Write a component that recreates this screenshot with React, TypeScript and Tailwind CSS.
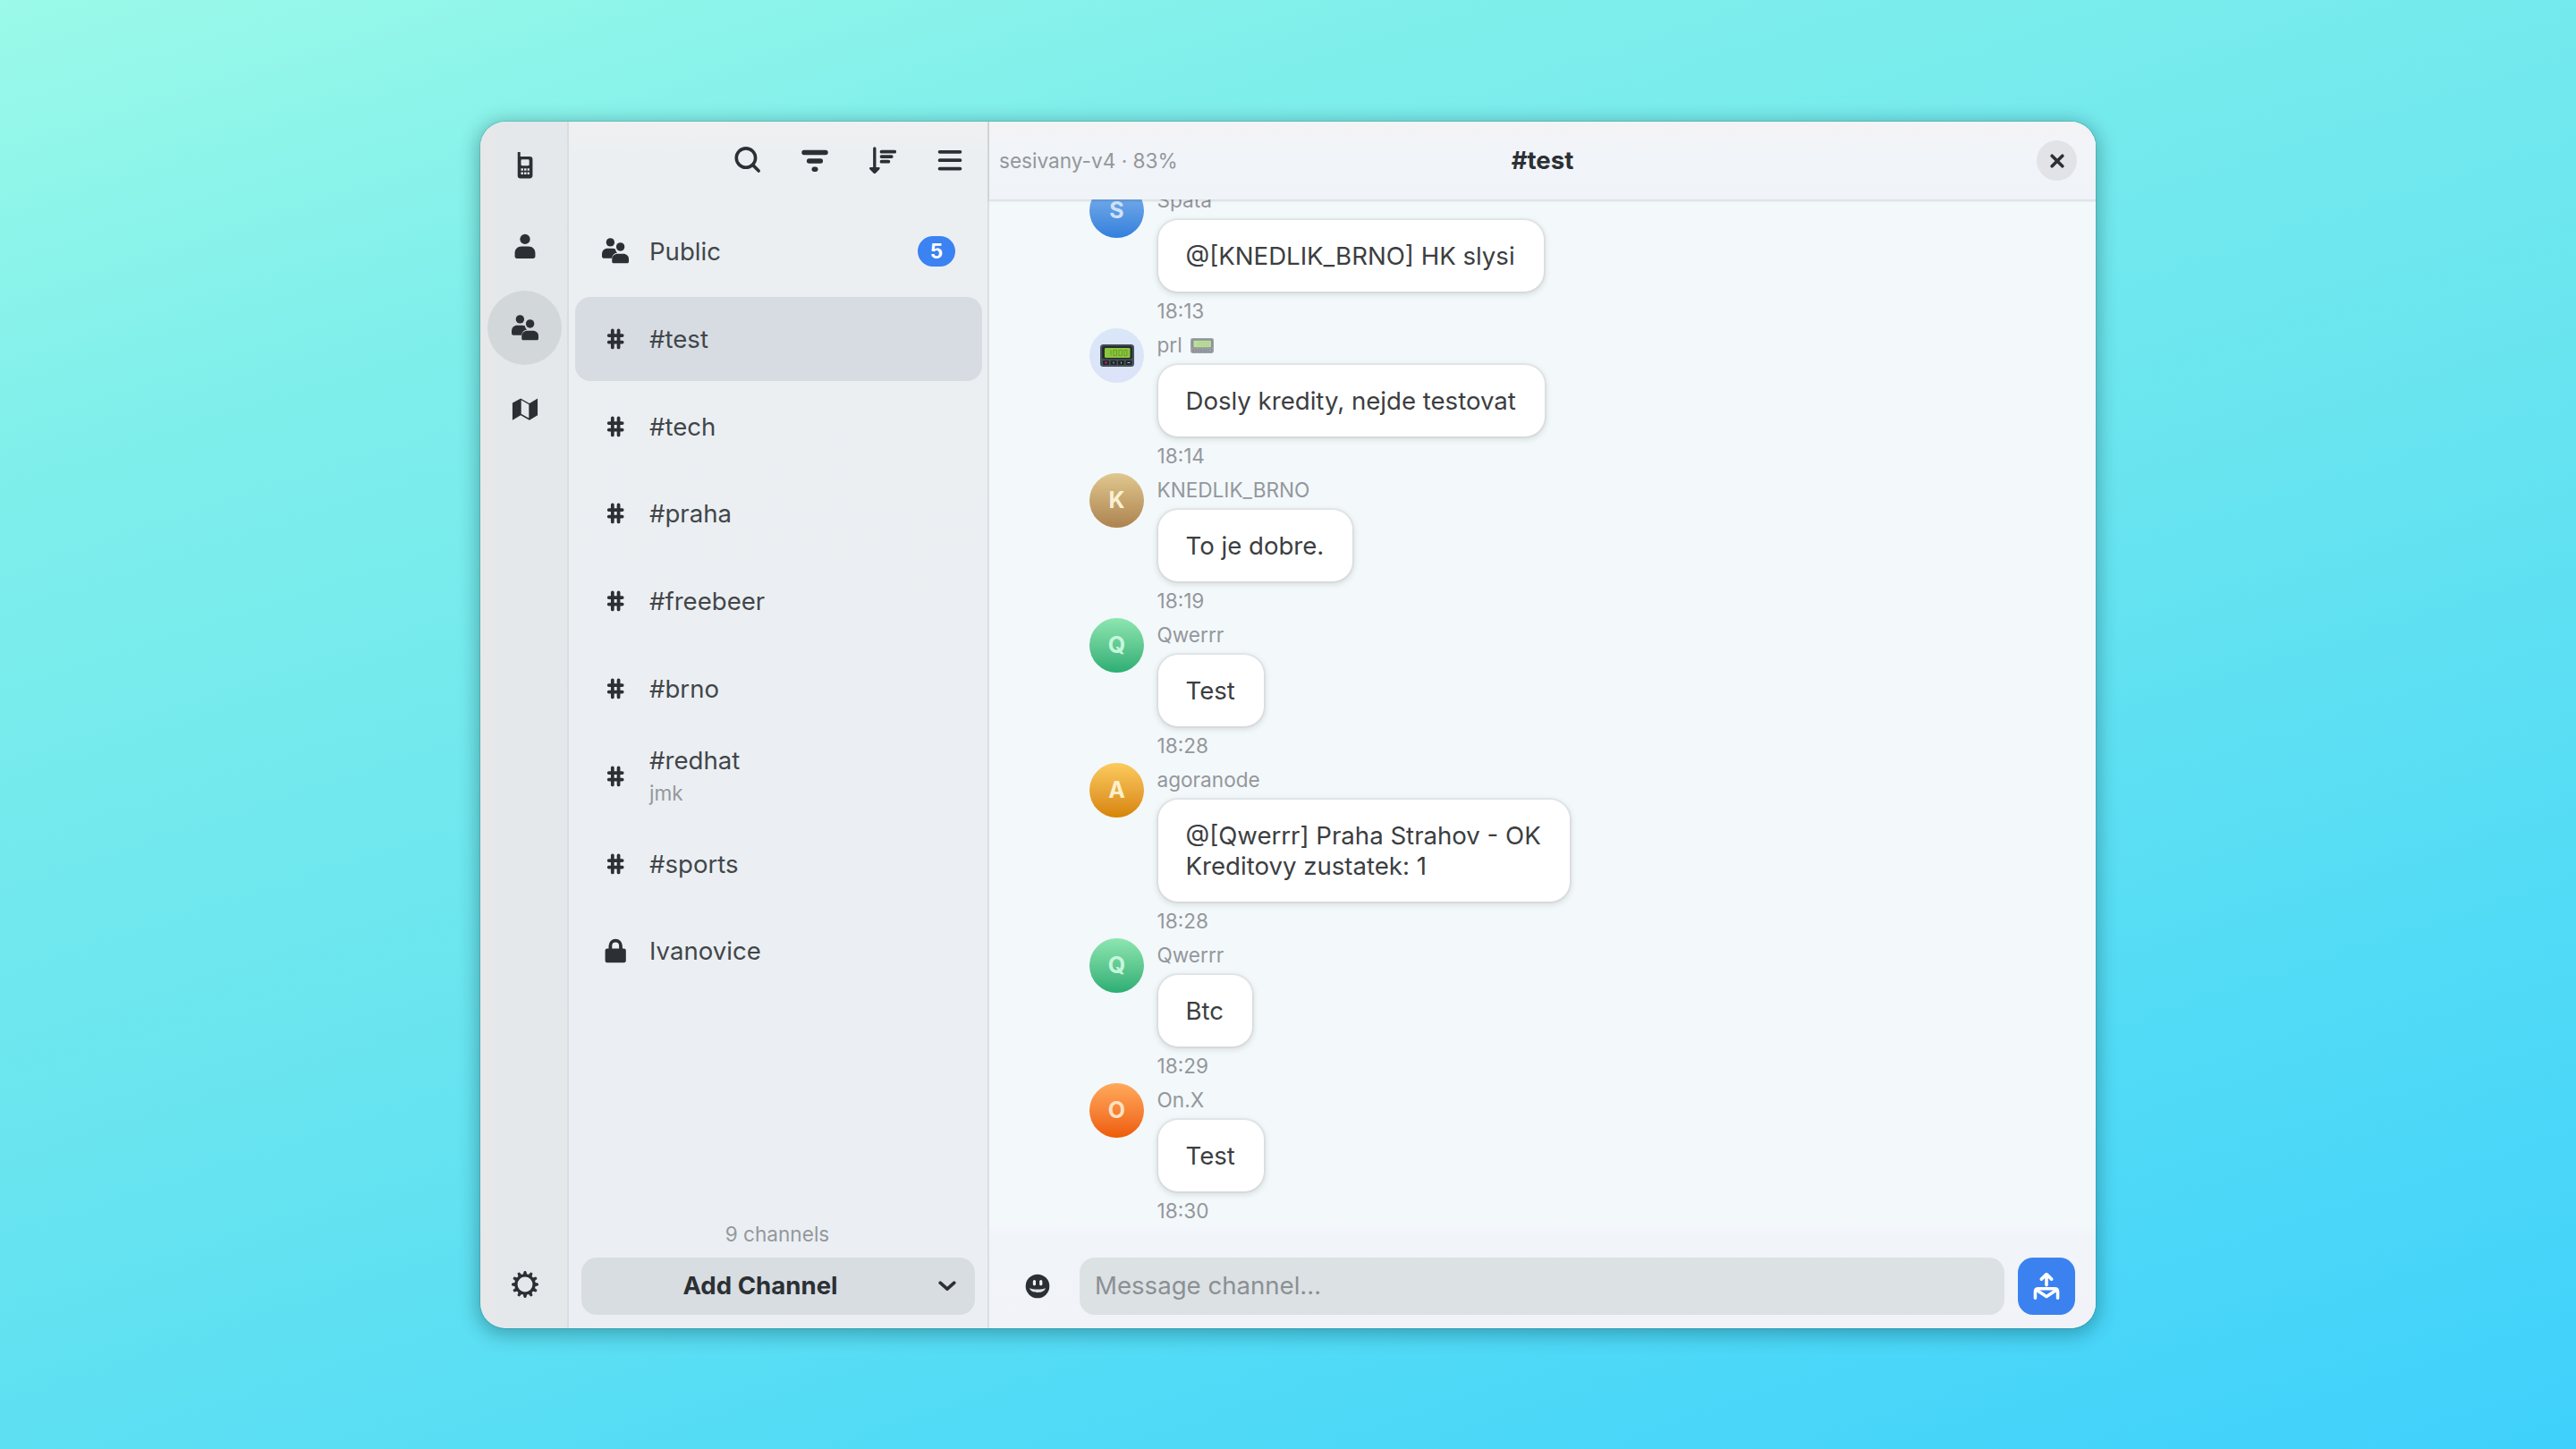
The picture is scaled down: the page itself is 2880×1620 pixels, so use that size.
import type { ReactNode } from "react";
import clsx from "clsx";

type IconProps = { className?: string };

// All icons share the 16x16 symbolic grid.
function Icon({ className, children }: IconProps & { children: ReactNode }) {
  return (
    <svg viewBox="0 0 16 16" fill="currentColor" className={clsx("block h-[30px] w-[30px] shrink-0", className)}>
      {children}
    </svg>
  );
}

function PhoneIcon() {
  return (
    <Icon>
      <path
        fillRule="evenodd"
        d="M3.600 .4a.8.8 0 0 1 1.600 0V2.600H10.800a1.700 1.700 0 0 1 1.700 1.700v9.600A1.800 1.800 0 0 1 10.700 15.700H5.300A1.700 1.700 0 0 1 3.600 14zM5.600 5v2.500a.6.600 0 0 0 .6.600h3.700a.6.600 0 0 0 .6-.6V5a.6.600 0 0 0-.6-.6H6.200a.6.600 0 0 0-.6.600zM5.600 9.700v1.300h1.300V9.700zm1.900 0v1.300h1.300V9.700zm1.900 0v1.300h1.200V9.700zM5.600 12v1.300h1.300V12zm1.900 0v1.300h1.300V12zm1.900 0v1.300h1.200V12z"
      />
    </Icon>
  );
}

function PersonIcon() {
  return (
    <Icon>
      <circle cx="8" cy="3.400" r="3" />
      <path d="M6 7.700h4c2.600 0 4.100 1.700 4.100 4.100v1.800c0 .8-.5 1.300-1.300 1.300H3.200c-.8 0-1.300-.5-1.300-1.300v-1.800c0-2.400 1.500-4.100 4.100-4.100z" />
    </Icon>
  );
}

function PeopleIcon() {
  return (
    <Icon>
      <circle cx="5" cy="2.600" r="2.500" />
      <circle cx="11" cy="5.300" r="2.500" />
      <path d="M3.500 6.200h2.700c.7 0 1.300.1 1.800.4.100.9.500 1.600 1.100 2.200-1.800.3-3 1.500-3.200 3.300H1C.4 12.100 0 11.700 0 11.100V9.700c0-2.100 1.300-3.500 3.500-3.500z" />
      <path d="M9.500 9.500h3c2.200 0 3.500 1.300 3.500 3.200v1.400c0 .6-.4 1-1 1H7c-.6 0-1-.4-1-1v-1.400c0-1.900 1.300-3.200 3.500-3.200z" />
    </Icon>
  );
}

function MapIcon() {
  return (
    <Icon>
      <path
        fillRule="evenodd"
        d="M.5 4 5.400 1.300l5.200 2.900 4.900-2.900v10L10.600 14.200l-5.200-2.900L.5 14.200zM5.700 2.300v8.200l4.600 2.600V4.900z"
      />
    </Icon>
  );
}

function GearIcon() {
  const teeth = Array.from({ length: 12 }, (_, i) => i * 30);
  return (
    <Icon>
      <circle cx="8" cy="8" r="5.400" fill="none" stroke="currentColor" strokeWidth="1.800" />
      {teeth.map((deg) => (
        <path key={deg} d="M7 2.800 7.500.3h1l.5 2.500z" transform={`rotate(${deg} 8 8)`} stroke="currentColor" strokeWidth=".5" strokeLinejoin="round" />
      ))}
    </Icon>
  );
}

function SearchIcon() {
  return (
    <Icon>
      <g fill="none" stroke="currentColor" strokeWidth="1.900" strokeLinecap="round">
        <circle cx="6.900" cy="6.700" r="5.700" />
        <path d="m11.100 11 3.400 3.400" />
      </g>
    </Icon>
  );
}

function FilterIcon() {
  return (
    <Icon>
      <g stroke="currentColor" strokeWidth="2.900" strokeLinecap="round">
        <path d="M1.600 3.500h12.800M4.600 8.500h6.800" />
        <path d="M7.600 13.500h.8" />
      </g>
    </Icon>
  );
}

function SortIcon() {
  return (
    <Icon>
      <path d="M2.200 1a.9.900 0 0 1 1.800 0v11.200h1.500c.7 0 1 .7.500 1.200l-2.200 2.300c-.4.400-1 .4-1.400 0L.200 13.400c-.5-.5-.2-1.200.5-1.200h1.500z" />
      <path d="M7.200 3h7.900M7.200 5.900h6M7.200 8.900h4.200" stroke="currentColor" strokeWidth="2" strokeLinecap="round" />
    </Icon>
  );
}

function MenuIcon() {
  return (
    <Icon>
      <path d="M1.900 3.100h12.200M1.900 8.100h12.200M1.900 13.100h12.200" stroke="currentColor" strokeWidth="2" strokeLinecap="round" />
    </Icon>
  );
}

function HashIcon() {
  return (
    <Icon>
      <path
        d="M6.300 2.800v10.200M9.900 2.800v10.200M4.100 5.900h8M4.100 9.900h8"
        stroke="currentColor"
        strokeWidth="2"
        strokeLinecap="round"
      />
    </Icon>
  );
}

function LockIcon() {
  return (
    <Icon>
      <path d="M5 8V5a3.100 3.100 0 0 1 6.200 0V8" fill="none" stroke="currentColor" strokeWidth="2" />
      <rect x="1.900" y="6.600" width="12.400" height="8.400" rx="1.200" />
    </Icon>
  );
}

function SmileIcon() {
  return (
    <Icon>
      <circle cx="8" cy="8" r="7.100" />
      <path d="M6.100 5.100v1.700M10 5.100v1.700" stroke="#f1f4f8" strokeWidth="1.700" strokeLinecap="round" />
      <path d="M3.200 9.200c1.200.5 2.800.7 4.800.7s3.600-.2 4.800-.7c-.5 1.600-2.200 2.500-4.800 2.500s-4.300-.9-4.800-2.500z" fill="#dfe3e7" />
    </Icon>
  );
}

function SendIcon() {
  return (
    <Icon>
      <g fill="none" stroke="currentColor" strokeWidth="1.900" strokeLinecap="round" strokeLinejoin="round">
        <path d="M8 7.300V1.200M5 3.800l3-3 3 3" />
        <path d="M1.300 15v-3.700c0-1.200.6-1.800 1.800-1.800h9.800c1.200 0 1.800.6 1.800 1.800V15" />
        <path d="m2.500 10.500 5.500 3.700 5.500-3.700" />
      </g>
    </Icon>
  );
}

function Pager({ className }: IconProps) {
  return (
    <svg viewBox="0 0 38 25" preserveAspectRatio="none" className={clsx("block shrink-0", className)}>
      <rect width="38" height="25" rx="3.500" fill="#46525a" />
      <rect x="2" y="1.800" width="34" height="14.700" rx="2.500" fill="#252c30" />
      <rect x="5" y="4" width="28.500" height="11" rx="1.200" fill="#8dc63a" />
      <path d="M12 6.500v6M15 6.500h3.500v6H15zM21 6.500h3.500v6H21zM27 6.500h3v6h-3z" fill="none" stroke="#6aa033" strokeWidth="1.100" />
      <g fill="#20272b">
        <rect x="3" y="18" width="7" height="5" rx="1" />
        <rect x="11.500" y="18" width="7" height="5" rx="1" />
        <rect x="20" y="18" width="7" height="5" rx="1" />
        <rect x="28.500" y="18" width="7" height="5" rx="1" />
      </g>
      <circle cx="6.500" cy="20.500" r="1.400" fill="#c2185b" />
      <path d="M15 19.500v2M23.500 19.500v2M30.500 20.500h3" stroke="#b0bec5" strokeWidth="1" />
    </svg>
  );
}

type Channel = { name: string; kind: "public" | "hash" | "lock"; detail?: string; unread?: number };

const channels: Channel[] = [
  { name: "Public", kind: "public", unread: 5 },
  { name: "#test", kind: "hash" },
  { name: "#tech", kind: "hash" },
  { name: "#praha", kind: "hash" },
  { name: "#freebeer", kind: "hash" },
  { name: "#brno", kind: "hash" },
  { name: "#redhat", kind: "hash", detail: "jmk" },
  { name: "#sports", kind: "hash" },
  { name: "Ivanovice", kind: "lock" }
];

type Message = { from: string; initial?: string; avatar: string; lines: string[]; time: string };

const messages: Message[] = [
  { from: "Spata", initial: "S", avatar: "from-[#83b6ec] to-[#337fdc] text-[#cfe1f5]", lines: ["@[KNEDLIK_BRNO] HK slysi"], time: "18:13" },
  { from: "prl", avatar: "from-[#d9e7f7] to-[#dde3f9]", lines: ["Dosly kredity, nejde testovat"], time: "18:14" },
  { from: "KNEDLIK_BRNO", initial: "K", avatar: "from-[#e0c88f] to-[#ad8350] text-[#faf0d4]", lines: ["To je dobre."], time: "18:19" },
  { from: "Qwerrr", initial: "Q", avatar: "from-[#8de6b1] to-[#29ae74] text-[#c6f6da]", lines: ["Test"], time: "18:28" },
  { from: "agoranode", initial: "A", avatar: "from-[#fccb5c] to-[#d68400] text-[#fdf0cb]", lines: ["@[Qwerrr] Praha Strahov - OK", "Kreditovy zustatek: 1"], time: "18:28" },
  { from: "Qwerrr", initial: "Q", avatar: "from-[#8de6b1] to-[#29ae74] text-[#c6f6da]", lines: ["Btc"], time: "18:29" },
  { from: "On.X", initial: "O", avatar: "from-[#ffa95a] to-[#ed5b00] text-[#ffe2c2]", lines: ["Test"], time: "18:30" }
];

function NavRail() {
  return (
    <nav className="flex w-[99px] shrink-0 flex-col items-center border-r-2 border-[#d8dde0] bg-gradient-to-r from-[#e8e8e9] via-[#e5e8eb] via-20% to-[#e4e8eb] pt-[7px] pb-[31px] pl-[2px]">
      <button type="button" className="grid h-[83px] w-[83px] place-items-center rounded-full"><PhoneIcon /></button>
      <button type="button" className="mt-2 grid h-[83px] w-[83px] place-items-center rounded-full"><PersonIcon /></button>
      <button type="button" className="mt-2 grid h-[83px] w-[83px] place-items-center rounded-full bg-[#d2d8da]"><PeopleIcon /></button>
      <button type="button" className="mt-2 grid h-[83px] w-[83px] place-items-center rounded-full"><MapIcon /></button>
      <button type="button" className="mt-auto grid h-[36px] w-[83px] place-items-center"><GearIcon /></button>
    </nav>
  );
}

function ChannelRow({ channel, selected }: { channel: Channel; selected: boolean }) {
  return (
    <li className={clsx("flex h-[94px] items-center rounded-[17px] pr-[30px] pl-[30px]", selected && "bg-[#d7dce3]")}>
      {channel.kind === "public" && <PeopleIcon />}
      {channel.kind === "hash" && <HashIcon />}
      {channel.kind === "lock" && <LockIcon />}
      <div className="ml-[23px] grow text-[#42464a]">
        <div className="leading-[34px]">{channel.name}</div>
        {channel.detail && <div className="mt-1 text-[22.600px] leading-[32px] text-[#94989c]">{channel.detail}</div>}
      </div>
      {channel.unread && (
        <span className="grid h-[34px] w-[42px] place-items-center rounded-full bg-[#3b82f2] text-[22.600px] font-bold text-white">
          {channel.unread}
        </span>
      )}
    </li>
  );
}

function Sidebar() {
  return (
    <aside className="flex w-[470px] shrink-0 flex-col border-r-2 border-[#dadfe2] bg-gradient-to-b from-[#f0f0f1] via-[#ebeff2] via-3% to-[#ebeff3]">
      <header className="flex h-[86px] shrink-0 items-center justify-end gap-[45.500px] pr-[27px]">
        <SearchIcon />
        <FilterIcon />
        <SortIcon />
        <MenuIcon />
      </header>
      <ul className="flex grow flex-col gap-[3.800px] pt-[12px] pr-[6px] pl-[7px]">
        {channels.map((channel) => (
          <ChannelRow key={channel.name} channel={channel} selected={channel.name === "#test"} />
        ))}
      </ul>
      <p className="pr-[2px] text-center text-[22.600px] leading-[30px] text-[#94989c]">9 channels</p>
      <div className="mt-[11px] mr-[14px] mb-[15px] ml-[14px] flex h-[64px] items-center rounded-[17px] bg-[#d8dde2] font-bold">
        <span className="w-[400px] text-center">Add Channel</span>
        <svg viewBox="0 0 20 12" className="-ml-[1px] h-[12px] w-[20px]" fill="none" stroke="currentColor" strokeWidth="3.600" strokeLinecap="round" strokeLinejoin="round">
          <path d="m2.200 2.200 7.800 7 7.800-7" />
        </svg>
      </div>
    </aside>
  );
}

function MessageItem({ message }: { message: Message }) {
  return (
    <li className="flex shrink-0 items-start gap-[14.500px] pb-[4.100px]">
      <div className={clsx("mt-[1px] grid h-[61px] w-[61px] shrink-0 place-items-center rounded-full bg-gradient-to-b text-[25px] font-bold", message.avatar)}>
        {message.initial ?? <Pager className="h-[25px] w-[38px]" />}
      </div>
      <div className="flex flex-col items-start pt-[6px] text-[22.600px] leading-[28px] text-[#94979b]">
        <div className="flex items-center gap-[9px]">
          {message.from}
          {!message.initial && <Pager className="h-[17px] w-[26px] opacity-50" />}
        </div>
        <div className="mt-[8px] ml-[1px] rounded-[22px] bg-white py-[22.700px] pr-[32px] pl-[31px] text-[27.600px] leading-[34.400px] text-[#3c3e41] shadow-[0_0_0_2px_rgba(0,0,6,0.04),0_2px_6px_2px_rgba(0,0,6,0.10)]">
          {message.lines.map((line) => (
            <div key={line}>{line}</div>
          ))}
        </div>
        <div className="mt-[8px]">{message.time}</div>
      </div>
    </li>
  );
}

function Conversation() {
  return (
    <main className="flex min-w-0 grow flex-col bg-[#f3f8fb]">
      <header className="z-10 grid h-[87px] shrink-0 grid-cols-[1fr_auto_1fr] items-center bg-gradient-to-b from-[#f4f3f5] via-[#f1f4f8] via-40% to-[#f0f3f7] shadow-[0_1px_2px_1px_rgba(0,0,6,0.10)]">
        <span className="pl-[11px] text-[22.600px] text-[#94979b]">sesivany-v4 · 83%</span>
        <h1 className="font-bold">#test</h1>
        <button type="button" className="mr-[21px] grid h-[45px] w-[45px] place-items-center justify-self-end rounded-full bg-[#e1e3e6]">
          <svg viewBox="0 0 16 16" className="h-4 w-4" stroke="currentColor" strokeWidth="3.600" strokeLinecap="round">
            <path d="m2.200 2.200 11.600 11.600M13.800 2.200 2.200 13.800" />
          </svg>
        </button>
      </header>
      <ul className="flex min-h-0 grow flex-col justify-end overflow-hidden pl-[112px]">
        {messages.map((message) => (
          <MessageItem key={message.time + message.from} message={message} />
        ))}
      </ul>
      <footer className="flex h-[113px] shrink-0 items-center bg-gradient-to-b from-[#f3f7fb] via-[#f1f4f8] via-10% to-[#f1f3f8] pt-[18px] pr-[23px] pl-[39px]">
        <SmileIcon />
        <div className="ml-[32px] flex h-[64px] grow items-center rounded-[17px] bg-[#dce1e4] pl-[17px] text-[#8b9094]">Message channel…</div>
        <button type="button" className="ml-[15px] grid h-[64px] w-[64px] place-items-center rounded-[17px] bg-[#3b82f0] text-white">
          <SendIcon />
        </button>
      </footer>
    </main>
  );
}

export default function App() {
  return (
    <div className="h-[1620px] w-[2880px] bg-[linear-gradient(162deg,#9bfae9_0%,#80efeb_20%,#6ae5ef_50%,#52dbf6_76%,#3fd0fb_100%)] pt-[136px] pl-[537px] font-[Inter,sans-serif] text-[27.600px] text-[#2c3034]">
      <div className="flex h-[1349px] w-[1806px] overflow-hidden rounded-[28px] shadow-[0_0_0_1px_rgba(0,0,0,0.10),0_4px_20px_4px_rgba(0,50,60,0.32)]">
        <NavRail />
        <Sidebar />
        <Conversation />
      </div>
    </div>
  );
}
